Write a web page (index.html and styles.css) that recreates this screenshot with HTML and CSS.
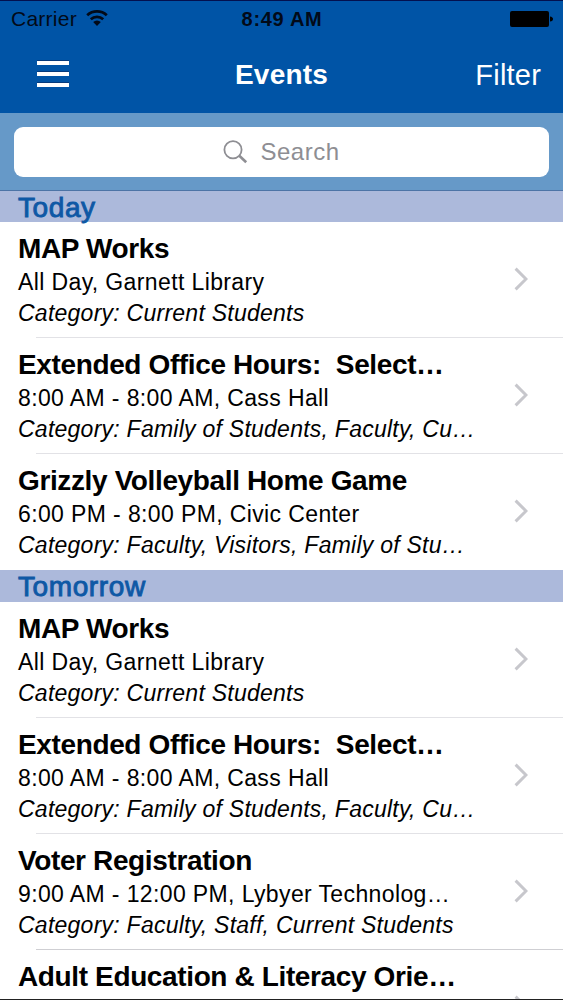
FILE: index.html
```
<!DOCTYPE html>
<html lang="en">
<head>
    <meta charset="UTF-8">
    <meta name="viewport" content="width=device-width, initial-scale=1.0">
    <title>Events</title>
    <link rel="stylesheet" href="styles.css">
</head>
<body>

    <div class="screen">

        <header class="top">
            <div class="status-bar">
                <div class="carrier">
                    <span class="carrier-name">Carrier</span>
                    <svg class="wifi" width="22" height="16" viewBox="0 0 22 16">
                        <path d="M1.2 5.2a14.6 14.6 0 0 1 19.6 0" fill="none" stroke="currentColor" stroke-width="2.8"/>
                        <path d="M4.8 9.2a9.2 9.2 0 0 1 12.4 0" fill="none" stroke="currentColor" stroke-width="2.8"/>
                        <path d="M7.2 12.1a5.4 5.4 0 0 1 7.6 0L11 16z" fill="currentColor"/>
                    </svg>
                </div>
                <span class="time">8:49 AM</span>
                <svg class="battery" width="43" height="16" viewBox="0 0 43 16">
                    <rect x="0" y="0" width="39" height="16" rx="2" fill="currentColor"/>
                    <path d="M40 5.5q3 .5 3 2.5t-3 2.5z" fill="currentColor"/>
                </svg>
            </div>
            <div class="nav-bar">
                <div class="menu">
                    <span></span>
                    <span></span>
                    <span></span>
                </div>
                <h1>Events</h1>
                <a class="filter">Filter</a>
            </div>
        </header>

        <div class="search-bar">
            <div class="search-field">
                <svg width="25" height="24" viewBox="0 0 25 24" fill="none" stroke="#8e8e93">
                    <circle cx="10" cy="9.8" r="8.6" stroke-width="1.8"/>
                    <path d="M16.3 15.7l6.9 6.6" stroke-width="2.6"/>
                </svg>
                <span class="placeholder">Search</span>
            </div>
        </div>

        <!-- Today -->
        <h2 class="section today">Today</h2>
        <ul class="events">
            <li>
                <div class="event">
                    <h3>MAP Works</h3>
                    <p class="when">All Day, Garnett Library</p>
                    <p class="category">Category: Current Students</p>
                </div>
                <svg class="arrow" width="14" height="24" viewBox="0 0 14 24"><path d="M1.6 1.6L12 12L1.6 22.4"/></svg>
            </li>
            <li>
                <div class="event">
                    <h3>Extended Office Hours:  Select…</h3>
                    <p class="when">8:00 AM - 8:00 AM, Cass Hall</p>
                    <p class="category">Category: Family of Students, Faculty, Cu…</p>
                </div>
                <svg class="arrow" width="14" height="24" viewBox="0 0 14 24"><path d="M1.6 1.6L12 12L1.6 22.4"/></svg>
            </li>
            <li>
                <div class="event">
                    <h3>Grizzly Volleyball Home Game</h3>
                    <p class="when">6:00 PM - 8:00 PM, Civic Center</p>
                    <p class="category">Category: Faculty, Visitors, Family of Stu…</p>
                </div>
                <svg class="arrow" width="14" height="24" viewBox="0 0 14 24"><path d="M1.6 1.6L12 12L1.6 22.4"/></svg>
            </li>
        </ul>

        <!-- Tomorrow -->
        <h2 class="section">Tomorrow</h2>
        <ul class="events">
            <li>
                <div class="event">
                    <h3>MAP Works</h3>
                    <p class="when">All Day, Garnett Library</p>
                    <p class="category">Category: Current Students</p>
                </div>
                <svg class="arrow" width="14" height="24" viewBox="0 0 14 24"><path d="M1.6 1.6L12 12L1.6 22.4"/></svg>
            </li>
            <li>
                <div class="event">
                    <h3>Extended Office Hours:  Select…</h3>
                    <p class="when">8:00 AM - 8:00 AM, Cass Hall</p>
                    <p class="category">Category: Family of Students, Faculty, Cu…</p>
                </div>
                <svg class="arrow" width="14" height="24" viewBox="0 0 14 24"><path d="M1.6 1.6L12 12L1.6 22.4"/></svg>
            </li>
            <li>
                <div class="event">
                    <h3>Voter Registration</h3>
                    <p class="when">9:00 AM - 12:00 PM, Lybyer Technolog…</p>
                    <p class="category">Category: Faculty, Staff, Current Students</p>
                </div>
                <svg class="arrow" width="14" height="24" viewBox="0 0 14 24"><path d="M1.6 1.6L12 12L1.6 22.4"/></svg>
            </li>
            <li class="last">
                <div class="event">
                    <h3>Adult Education &amp; Literacy Orie…</h3>
                </div>
                <svg class="arrow" width="14" height="24" viewBox="0 0 14 24"><path d="M1.6 1.6L12 12L1.6 22.4"/></svg>
            </li>
        </ul>

    </div>

</body>
</html>
```
FILE: styles.css
```
* {
    box-sizing: border-box;
}

body {
    margin: 0;
    font-family: "Liberation Sans", Arial, sans-serif;
    background-color: #fff;
    color: #000;
}

h1, h2, h3, p, ul {
    margin: 0;
    padding: 0;
}

.screen {
    width: 563px;
    height: 1000px;
    overflow: hidden;
    border-top: 1px solid #03104f;
    border-bottom: 1px solid #222;
}

.top {
    height: 112px;
    background-color: #0054a6;
}

.status-bar {
    display: grid;
    grid-template-columns: 1fr auto 1fr;
    align-items: center;
    height: 36px;
    padding: 0 10px 0 11px;
    color: #020a18;
}

.carrier {
    display: flex;
    align-items: center;
    gap: 9px;
}

.carrier-name {
    font-size: 21px;
    letter-spacing: 0.25px;
}

.wifi {
    margin-bottom: 2px;
}

.time {
    font-size: 20px;
    font-weight: bold;
    letter-spacing: 0.7px;
}

.battery {
    justify-self: end;
    color: #000;
}

.nav-bar {
    display: grid;
    grid-template-columns: 1fr auto 1fr;
    align-items: center;
    height: 76px;
    padding: 0 22px;
    color: #fff;
}

.menu {
    display: flex;
    flex-direction: column;
    gap: 7px;
    width: 32px;
    margin: 0 0 2px 15px;
}

.menu span {
    height: 4px;
    background-color: #fff;
    box-shadow: 0 -1px 0 #053a7c;
}

.nav-bar h1 {
    font-size: 28px;
    line-height: 32px;
    letter-spacing: 0.2px;
}

.filter {
    justify-self: end;
    font-size: 29px;
    line-height: 32px;
    letter-spacing: 0.2px;
}

.search-bar {
    height: 78px;
    padding: 14px;
    background-color: #6699c8;
    border-bottom: 1px solid #4d74a6;
}

.search-field {
    display: flex;
    align-items: center;
    justify-content: center;
    gap: 12px;
    height: 50px;
    border-radius: 9px;
    background-color: #fff;
}

.placeholder {
    font-size: 24px;
    letter-spacing: 0.5px;
    color: #8e8e93;
}

.section {
    height: 32px;
    padding-left: 18px;
    background-color: #acb9db;
    color: #0e58a5;
    font-size: 28px;
    line-height: 33px;
    font-weight: normal;
    letter-spacing: 0.6px;
    -webkit-text-stroke: 0.9px #0e58a5;
}

.today {
    height: 31px;
}

.events {
    list-style: none;
}

.events li {
    display: flex;
    align-items: center;
    justify-content: space-between;
    position: relative;
    height: 116px;
    padding: 0 35px 0 18px;
}

/* separator starts a bit inside the text */
.events li + li::before {
    content: "";
    position: absolute;
    top: -1px;
    left: 36px;
    right: 0;
    height: 1px;
    background-color: #e2e2e6;
}

.events li.last::before {
    background-color: #cfcfd3;
}

.event {
    align-self: flex-start;
    padding-top: 10px;
}

.event h3, .event p {
    white-space: pre;
}

.event h3 {
    font-size: 28px;
    line-height: 33px;
    letter-spacing: -0.37px;
}

.when, .category {
    font-size: 23px;
    line-height: 31px;
}

.when {
    padding-top: 2px;
    letter-spacing: 0.38px;
}

.category {
    font-style: italic;
    letter-spacing: 0.25px;
}

.arrow {
    margin-bottom: 2px;
    fill: none;
    stroke: #c7c7cc;
    stroke-width: 3;
}
```
